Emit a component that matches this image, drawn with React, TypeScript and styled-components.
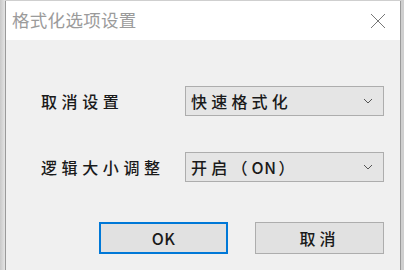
import styled, { createGlobalStyle } from "styled-components";

const GlobalStyle = createGlobalStyle`
  html, body {
    margin: 0;
    padding: 0;
    background: #d9d9d9;
  }
`;

const Backdrop = styled.div`
  width: 404px;
  height: 270px;
  overflow: hidden;
  background: linear-gradient(90deg, #c9c9c9 0, #e4e4e4 5px, #cfcfcf 5px);
  padding-top: 1px;
  box-sizing: border-box;
`;

const Window = styled.div`
  margin-left: 5px;
  width: 396px;
  height: 275px;
  box-sizing: border-box;
  border-left: 1px solid #9a9a9a;
  border-right: 1px solid #9a9a9a;
  background: #f0f0f0;
  display: flex;
  flex-direction: column;
  font-family: "Noto Sans CJK SC", "Noto Sans", sans-serif;
`;

const TitleBar = styled.div`
  height: 39px;
  background: #ffffff;
  display: flex;
  align-items: center;
  justify-content: space-between;
  padding: 0 14px 0 6px;
`;

const Title = styled.span`
  font-size: 17.5px;
  color: #9b9b9b;
  letter-spacing: 0.3px;
  padding-bottom: 2px;
`;

const Body = styled.div`
  flex: 1;
  padding: 46px 15px 0 35px;
  display: flex;
  flex-direction: column;
`;

const Row = styled.div<{ $gap: number }>`
  display: flex;
  align-items: center;
  height: 30px;
  margin-bottom: ${(p) => p.$gap}px;
`;

const Label = styled.span`
  width: 144px;
  font-size: 16px;
  font-weight: 500;
  letter-spacing: 4.6px;
  color: #1a1a1a;
`;

const Select = styled.div`
  width: 199px;
  height: 30px;
  box-sizing: border-box;
  border: 1px solid #adadad;
  background: #e5e5e5;
  display: flex;
  align-items: center;
  justify-content: space-between;
  padding: 0 10px 0 5px;
  font-size: 16px;
  font-weight: 500;
  letter-spacing: 4.2px;
  color: #1a1a1a;
`;

const Latin = styled.span`
  letter-spacing: 0.5px;
  margin-right: 2px;
`;

const Buttons = styled.div`
  display: flex;
  gap: 27px;
  padding-left: 58px;
  margin-top: 10px;
`;

const Button = styled.div<{ $primary?: boolean }>`
  width: 129px;
  height: 32px;
  box-sizing: border-box;
  border: ${(p) => (p.$primary ? "2px solid #0078d7" : "1px solid #adadad")};
  background: #e1e1e1;
  display: flex;
  align-items: center;
  justify-content: center;
  font-size: 16px;
  font-weight: 500;
  letter-spacing: ${(p) => (p.$primary ? "0.5px" : "4px")};
  color: #1a1a1a;
`;

const Chevron = () => (
  <svg width="10" height="6" viewBox="0 0 10 6">
    <path d="M1 1 L5 5 L9 1" fill="none" stroke="#555" strokeWidth="1" />
  </svg>
);

const CloseIcon = () => (
  <svg width="16" height="16" viewBox="0 0 16 16">
    <path d="M1 1 L15 15 M15 1 L1 15" stroke="#777" strokeWidth="1" />
  </svg>
);

export default function App() {
  return (
    <>
      <GlobalStyle />
      <Backdrop>
        <Window>
          <TitleBar>
            <Title>格式化选项设置</Title>
            <CloseIcon />
          </TitleBar>
          <Body>
            <Row $gap={36}>
              <Label>取消设置</Label>
              <Select>
                <span>快速格式化</span>
                <Chevron />
              </Select>
            </Row>
            <Row $gap={30}>
              <Label>逻辑大小调整</Label>
              <Select>
                <span>
                  开启（<Latin>ON</Latin>）
                </span>
                <Chevron />
              </Select>
            </Row>
            <Buttons>
              <Button $primary>OK</Button>
              <Button>取消</Button>
            </Buttons>
          </Body>
        </Window>
      </Backdrop>
    </>
  );
}
